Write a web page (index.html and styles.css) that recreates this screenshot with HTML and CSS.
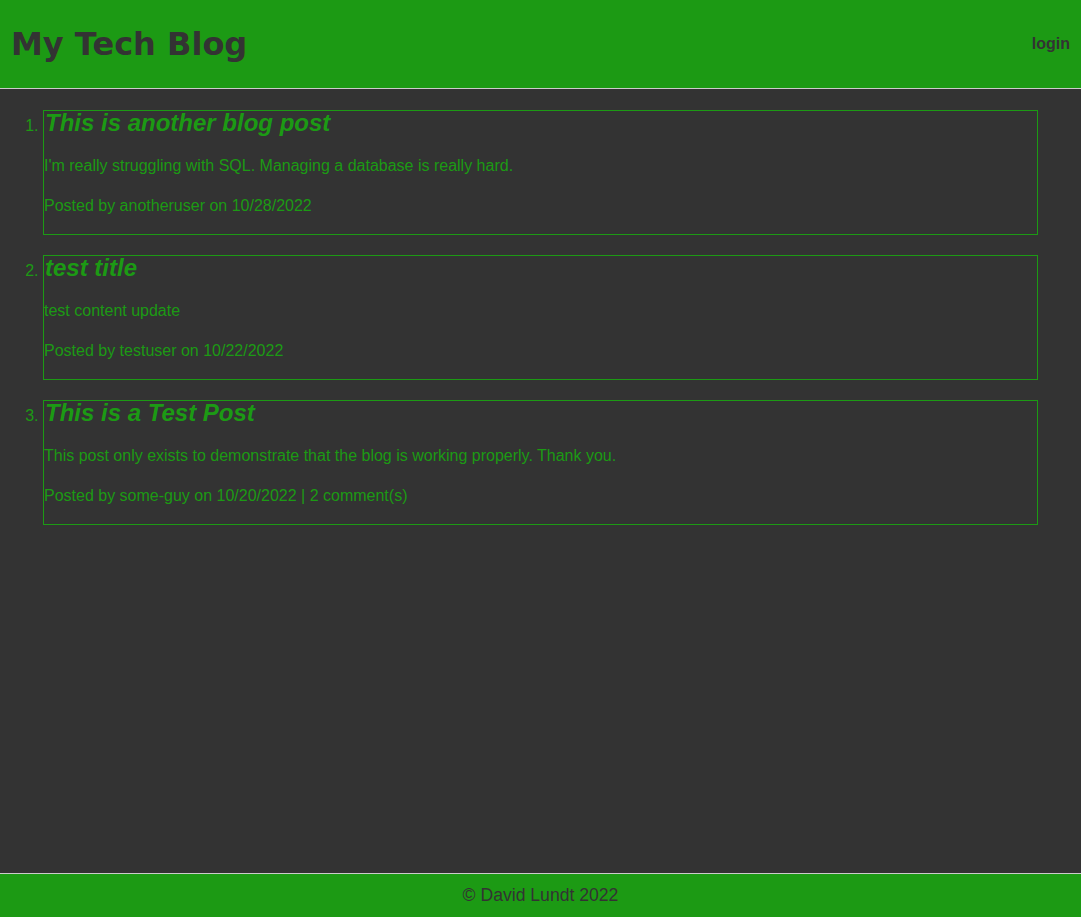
FILE: index.html
```html
<!DOCTYPE html>
<html lang="en">
<head>
<meta charset="utf-8">
<title>My Tech Blog</title>
<link rel="stylesheet" href="styles.css">
</head>
<body>
<header class="site-header">
  <h1 class="site-title">My Tech Blog</h1>
  <a class="login-link" href="#">login</a>
</header>
<main class="content">
  <ol class="post-list">
    <li class="post">
      <h2 class="post-title">This is another blog post</h2>
      <p class="post-text">I'm really struggling with SQL. Managing a database is really hard.</p>
      <p class="post-meta">Posted by anotheruser on 10/28/2022</p>
    </li>
    <li class="post">
      <h2 class="post-title">test title</h2>
      <p class="post-text">test content update</p>
      <p class="post-meta">Posted by testuser on 10/22/2022</p>
    </li>
    <li class="post">
      <h2 class="post-title">This is a Test Post</h2>
      <p class="post-text">This post only exists to demonstrate that the blog is working properly. Thank you.</p>
      <p class="post-meta">Posted by some-guy on 10/20/2022 | 2 comment(s)</p>
    </li>
  </ol>
</main>
<footer class="site-footer">© David Lundt 2022</footer>
</body>
</html>
```
FILE: styles.css
```css
html, body {
  margin: 0;
  padding: 0;
}
body {
  min-height: 100vh;
  display: flex;
  flex-direction: column;
  background: #333333;
  color: #1c9a14;
  font-family: "Liberation Sans", Arial, sans-serif;
  font-size: 16px;
}
.site-header {
  height: 88px;
  background: #1c9a14;
  border-bottom: 1px solid #cccccc;
  display: flex;
  align-items: center;
  justify-content: space-between;
  padding: 0 11px 0 11px;
  color: #333333;
}
.site-title {
  margin: 0;
  font-family: "DejaVu Sans", Verdana, sans-serif;
  font-size: 32px;
  font-weight: bold;
  letter-spacing: 0;
}
.login-link {
  color: #333333;
  font-weight: bold;
  text-decoration: none;
}
.content {
  flex: 1;
  padding-top: 21px;
}
.post-list {
  margin: 0;
  padding: 0 43px;
}
.post {
  border: 1px solid #1c9a14;
  margin-bottom: 20px;
  line-height: 24px;
}
.post-title {
  margin: 0 0 19px;
  font-size: 24px;
  line-height: 24px;
  font-style: italic;
  font-weight: bold;
  padding-left: 1px;
}
.post-text,
.post-meta {
  margin: 0 0 16px;
}
.site-footer {
  height: 43px;
  background: #1c9a14;
  border-top: 1px solid #cccccc;
  color: #333333;
  font-size: 17.6px;
  display: flex;
  align-items: center;
  justify-content: center;
}
```
